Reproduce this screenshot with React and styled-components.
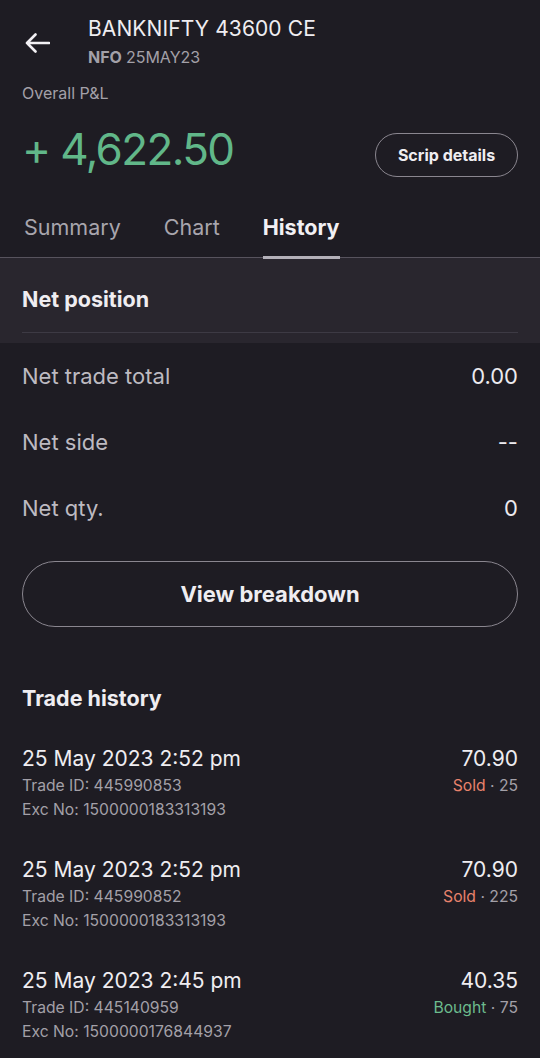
import React from "react";
import styled, { createGlobalStyle } from "styled-components";

const GlobalStyle = createGlobalStyle`
  html, body {
    margin: 0;
    padding: 0;
    background: #1e1c23;
  }
  body {
    font-family: Inter, "Noto Sans", "Liberation Sans", sans-serif;
    color: #ebe9ee;
    -webkit-font-smoothing: antialiased;
  }
`;

const Page = styled.div`
  width: 540px;
  min-height: 1058px;
  background: #1e1c23;
  overflow: hidden;
`;

const Header = styled.div`
  display: flex;
  align-items: flex-start;
  gap: 38px;
  padding: 16px 22px 0 24px;
`;

const BackButton = styled.div`
  width: 26px;
  height: 42px;
  display: flex;
  align-items: center;
  margin-top: 6px;
`;

const TitleBlock = styled.div`
  display: flex;
  flex-direction: column;
`;

const Title = styled.div`
  font-size: 21px;
  line-height: 26px;
  color: #efedf1;
  letter-spacing: 0.1px;
`;

const SubTitle = styled.div`
  margin-top: 5px;
  font-size: 16px;
  line-height: 20px;
  color: #a3a0a8;

  b {
    font-weight: 700;
    margin-right: 4px;
  }
`;

const Caption = styled.div`
  margin: 16px 22px 0;
  font-size: 16px;
  line-height: 20px;
  color: #a3a0a8;
`;

const PnlRow = styled.div`
  display: flex;
  justify-content: space-between;
  align-items: flex-start;
  margin-top: 20px;
  padding: 0 22px 0 22px;
`;

const Amount = styled.div`
  font-size: 44px;
  line-height: 52px;
  color: #61b789;
  letter-spacing: -1.6px;
`;

const PillButton = styled.button`
  font-family: inherit;
  background: transparent;
  color: #efedf1;
  border: 1.5px solid #8a868f;
  border-radius: 999px;
  cursor: pointer;
  font-weight: 700;
  font-size: ${(p) => (p.$large ? "22px" : "16px")};
  height: ${(p) => (p.$large ? "66px" : "44px")};
  width: ${(p) => (p.$large ? "100%" : "143px")};
  margin-top: ${(p) => (p.$large ? "0" : "10px")};
`;

const Tabs = styled.div`
  display: flex;
  gap: 43px;
  margin-top: 36px;
  padding: 0 24px;
  border-bottom: 1px solid #57535d;
`;

const Tab = styled.div`
  font-size: 21.5px;
  line-height: 28px;
  padding-bottom: 15px;
  margin-bottom: -2px;
  color: ${(p) => (p.$active ? "#f2f0f4" : "#a8a5ad")};
  font-weight: ${(p) => (p.$active ? 700 : 400)};
  border-bottom: 3px solid ${(p) => (p.$active ? "#b3b0b8" : "transparent")};
`;

const NetHeader = styled.div`
  background: #29262e;
  padding: 28px 22px 10px;
`;

const SectionTitle = styled.div`
  font-size: 21.5px;
  line-height: 26px;
  font-weight: 700;
  color: #efedf1;
`;

const InnerDivider = styled.div`
  height: 1px;
  background: #3d3a44;
  margin-top: 20px;
`;

const Rows = styled.div`
  padding: 0 22px;
`;

const Row = styled.div`
  height: 66px;
  display: flex;
  align-items: center;
  justify-content: space-between;
  font-size: 22px;
`;

const RowLabel = styled.span`
  color: #bdbac1;
`;

const RowValue = styled.span`
  color: #eceaef;
`;

const ButtonWrap = styled.div`
  padding: 20px 22px 0;
`;

const HistoryBlock = styled.div`
  padding: 58px 22px 0;
`;

const TradeList = styled.div`
  display: flex;
  flex-direction: column;
  gap: 33px;
  margin-top: 33px;
`;

const Trade = styled.div`
  display: flex;
  justify-content: space-between;
`;

const TradeCol = styled.div`
  display: flex;
  flex-direction: column;
  align-items: ${(p) => (p.$right ? "flex-end" : "flex-start")};
`;

const TradeMain = styled.div`
  font-size: 21px;
  line-height: 30px;
  color: #efedf1;
`;

const TradeMeta = styled.div`
  font-size: 15.7px;
  line-height: 24px;
  color: #a3a0a8;
`;

const Side = styled.span`
  color: ${(p) => (p.$sold ? "#e8826c" : "#6cbb8d")};
`;

const BackArrow = () => (
  <svg width="26" height="20" viewBox="0 0 26 20" fill="none">
    <path
      d="M25 10H3M11.5 1.5L3 10l8.5 8.5"
      stroke="#f2f0f4"
      strokeWidth="2.6"
      strokeLinecap="round"
      strokeLinejoin="round"
    />
  </svg>
);

const trades = [
  { time: "25 May 2023 2:52 pm", id: "445990853", exc: "1500000183313193", price: "70.90", side: "Sold", qty: 25 },
  { time: "25 May 2023 2:52 pm", id: "445990852", exc: "1500000183313193", price: "70.90", side: "Sold", qty: 225 },
  { time: "25 May 2023 2:45 pm", id: "445140959", exc: "1500000176844937", price: "40.35", side: "Bought", qty: 75 },
];

const netRows = [
  ["Net trade total", "0.00"],
  ["Net side", "--"],
  ["Net qty.", "0"],
];

export default function App() {
  return (
    <Page>
      <GlobalStyle />
      <Header>
        <BackButton>
          <BackArrow />
        </BackButton>
        <TitleBlock>
          <Title>BANKNIFTY 43600 CE</Title>
          <SubTitle>
            <b>NFO</b>25MAY23
          </SubTitle>
        </TitleBlock>
      </Header>
      <Caption>Overall P&amp;L</Caption>
      <PnlRow>
        <Amount>+ 4,622.50</Amount>
        <PillButton>Scrip details</PillButton>
      </PnlRow>
      <Tabs>
        <Tab>Summary</Tab>
        <Tab>Chart</Tab>
        <Tab $active>History</Tab>
      </Tabs>
      <NetHeader>
        <SectionTitle>Net position</SectionTitle>
        <InnerDivider />
      </NetHeader>
      <Rows>
        {netRows.map(([label, value]) => (
          <Row key={label}>
            <RowLabel>{label}</RowLabel>
            <RowValue>{value}</RowValue>
          </Row>
        ))}
      </Rows>
      <ButtonWrap>
        <PillButton $large>View breakdown</PillButton>
      </ButtonWrap>
      <HistoryBlock>
        <SectionTitle>Trade history</SectionTitle>
        <TradeList>
          {trades.map((t, i) => (
            <Trade key={i}>
              <TradeCol>
                <TradeMain>{t.time}</TradeMain>
                <TradeMeta>Trade ID: {t.id}</TradeMeta>
                <TradeMeta>Exc No: {t.exc}</TradeMeta>
              </TradeCol>
              <TradeCol $right>
                <TradeMain>{t.price}</TradeMain>
                <TradeMeta>
                  <Side $sold={t.side === "Sold"}>{t.side}</Side> · {t.qty}
                </TradeMeta>
              </TradeCol>
            </Trade>
          ))}
        </TradeList>
      </HistoryBlock>
    </Page>
  );
}
